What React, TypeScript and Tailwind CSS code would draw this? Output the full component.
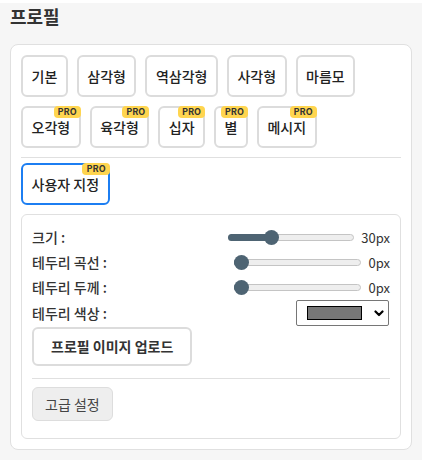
import React from "react";

const FONT = { fontFamily: '"Noto Sans CJK KR", "Noto Sans", sans-serif' };

function ShapeButton({ label, pro, active }: { label: string; pro?: boolean; active?: boolean }) {
  return (
    <div
      className={`relative flex h-[42px] items-center rounded-md border-2 bg-white px-[8.5px] text-[14px] font-medium leading-[20px] text-[#222] ${
        active ? "border-[#1c7ef2]" : "border-[#dcdcdc]"
      }`}
    >
      {label}
      {pro && (
        <span className="absolute -right-[2px] -top-[2px] rounded-[4px] bg-[#ffd54f] px-[4px] text-[9px] font-bold leading-[12px] text-[#333]">
          PRO
        </span>
      )}
    </div>
  );
}

function Slider({ thumbLeft, value, width }: { thumbLeft: number; value: string; width: number }) {
  return (
    <div className="flex items-center">
      <div className="relative h-[15px]" style={{ width }}>
        <div className="absolute left-0 right-0 top-[4px] h-[7px] rounded-full border border-[#c4c4c4] bg-[#eeeeee]" />
        <div
          className="absolute left-0 top-[4px] h-[7px] rounded-full bg-[#4e6473]"
          style={{ width: thumbLeft + 7 }}
        />
        <div
          className="absolute top-0 h-[15px] w-[15px] rounded-full bg-[#4e6473]"
          style={{ left: thumbLeft }}
        />
      </div>
      <span className="ml-auto pl-[7px] text-right text-[13px] leading-[16px] text-[#333]">{value}</span>
    </div>
  );
}

export default function App() {
  const row = [
    { label: "기본" },
    { label: "삼각형" },
    { label: "역삼각형" },
    { label: "사각형" },
    { label: "마름모" },
    { label: "오각형", pro: true },
    { label: "육각형", pro: true },
    { label: "십자", pro: true },
    { label: "별", pro: true },
    { label: "메시지", pro: true },
  ];
  return (
    <div className="min-h-[460px] bg-[#f6f6f6] px-[10px] pb-[9px]" style={FONT}>
      <div className="mb-[14px] mt-[3px] h-[27px] text-[18px] font-bold leading-[27px] text-[#333]">프로필</div>
      <div className="rounded-lg border border-[#e0e0e0] bg-white p-[10px]">
        <div className="flex flex-wrap gap-[9px]">
          {row.map((b) => (
            <ShapeButton key={b.label} label={b.label} pro={b.pro} />
          ))}
        </div>
        <div className="mt-[9px] h-px bg-[#e0e0e0]" />
        <div className="mt-[5px] flex">
          <ShapeButton label="사용자 지정" pro active />
        </div>
        <div className="mt-[9px] rounded-md border border-[#e0e0e0] p-[10px]">
          <div className="flex h-[25px] items-center justify-between">
            <span className="text-[14px] font-medium text-[#333]">크기 :</span>
            <div className="w-[162px]">
              <Slider thumbLeft={36} value="30px" width={127} />
            </div>
          </div>
          <div className="flex h-[25px] items-center justify-between">
            <span className="text-[14px] font-medium text-[#333]">테두리 곡선 :</span>
            <div className="w-[156px]">
              <Slider thumbLeft={0} value="0px" width={128} />
            </div>
          </div>
          <div className="flex h-[25px] items-center justify-between">
            <span className="text-[14px] font-medium text-[#333]">테두리 두께 :</span>
            <div className="w-[156px]">
              <Slider thumbLeft={0} value="0px" width={128} />
            </div>
          </div>
          <div className="flex h-[26px] items-center justify-between">
            <span className="text-[14px] font-medium text-[#333]">테두리 색상 :</span>
            <div className="mr-px flex h-[26px] w-[93px] items-center rounded-[2px] border border-[#767676] bg-white pl-[10px] pr-[4px]">
              <div className="h-[14px] w-[55px] border border-black bg-[#777777]" />
              <svg className="ml-auto" width="10" height="7" viewBox="0 0 10 7">
                <path d="M1.5 1.5 L5 5 L8.5 1.5" fill="none" stroke="#000" strokeWidth="2.2" strokeLinecap="round" strokeLinejoin="round" />
              </svg>
            </div>
          </div>
          <div className="mt-px flex">
            <div className="flex h-[39px] items-center rounded-md border-2 border-[#dcdcdc] bg-white px-[17px] text-[14px] font-semibold text-[#333]">
              프로필 이미지 업로드
            </div>
          </div>
          <div className="mt-[12px] h-px bg-[#e0e0e0]" />
          <div className="mb-[7px] mt-[8px] flex">
            <div className="flex h-[34px] items-center rounded-md border border-[#dddddd] bg-[#eeeeee] px-3 text-[14px] text-[#444]">
              고급 설정
            </div>
          </div>
        </div>
      </div>
    </div>
  );
}
